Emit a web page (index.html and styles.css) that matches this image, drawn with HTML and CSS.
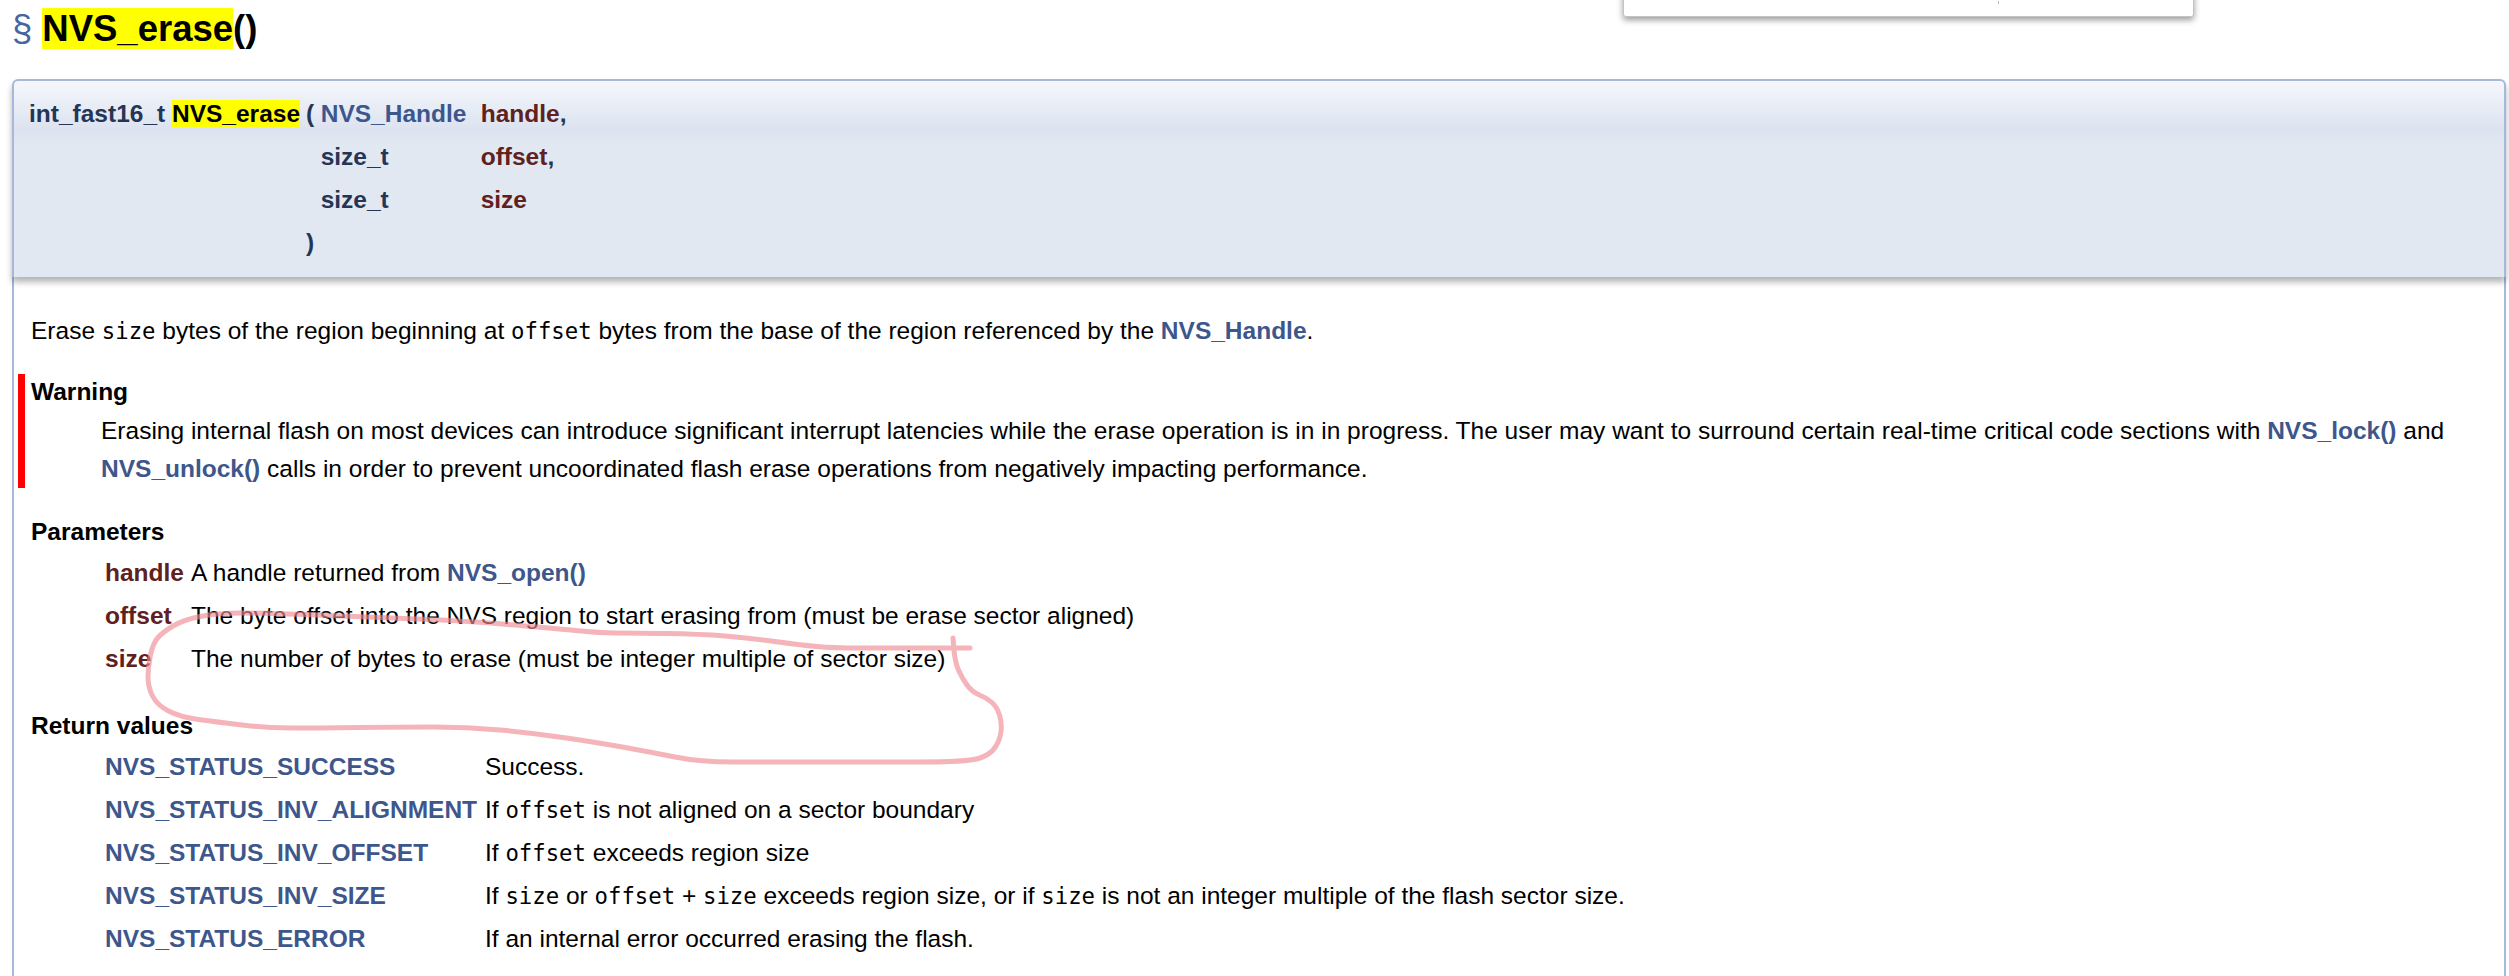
FILE: index.html
```html
<!DOCTYPE html>
<html lang="en">
<head>
<meta charset="utf-8">
<title>NVS_erase()</title>
<link rel="stylesheet" href="styles.css">
</head>
<body>
<div class="popup"><span class="popup-tick"></span></div>
<h2 class="memtitle"><span class="permalink">§</span><mark>NVS_erase</mark>()</h2>
<div class="memitem">
  <div class="memproto">
    <table class="memname">
      <tr><td class="fn">int_fast16_t <mark>NVS_erase</mark></td><td class="paren">(</td><td class="ptype"><a>NVS_Handle</a></td><td class="pname">handle<span class="comma">,</span></td></tr>
      <tr><td></td><td></td><td class="ptype">size_t</td><td class="pname">offset<span class="comma">,</span></td></tr>
      <tr><td></td><td></td><td class="ptype">size_t</td><td class="pname">size</td></tr>
      <tr><td></td><td class="paren">)</td><td></td><td></td></tr>
    </table>
  </div>
  <div class="memdoc">
    <p class="intro">Erase <code>size</code> bytes of the region beginning at <code>offset</code> bytes from the base of the region referenced by the <a>NVS_Handle</a>.</p>
    <dl class="warning">
      <dt>Warning</dt>
      <dd>Erasing internal flash on most devices can introduce significant interrupt latencies while the erase operation is in in progress. The user may want to surround certain real-time critical code sections with <a>NVS_lock()</a> and <a>NVS_unlock()</a> calls in order to prevent uncoordinated flash erase operations from negatively impacting performance.</dd>
    </dl>
    <div class="section-title">Parameters</div>
    <table class="params">
      <tr><td class="pn">handle</td><td>A handle returned from <a>NVS_open()</a></td></tr>
      <tr><td class="pn">offset</td><td>The byte offset into the NVS region to start erasing from (must be erase sector aligned)</td></tr>
      <tr><td class="pn">size</td><td>The number of bytes to erase (must be integer multiple of sector size)</td></tr>
    </table>
    <div class="section-title returns">Return values</div>
    <table class="retvals">
      <tr><td class="rv"><a>NVS_STATUS_SUCCESS</a></td><td>Success.</td></tr>
      <tr><td class="rv"><a>NVS_STATUS_INV_ALIGNMENT</a></td><td>If <code>offset</code> is not aligned on a sector boundary</td></tr>
      <tr><td class="rv"><a>NVS_STATUS_INV_OFFSET</a></td><td>If <code>offset</code> exceeds region size</td></tr>
      <tr><td class="rv"><a>NVS_STATUS_INV_SIZE</a></td><td>If <code>size</code> or <code>offset</code> + <code>size</code> exceeds region size, or if <code>size</code> is not an integer multiple of the flash sector size.</td></tr>
      <tr><td class="rv"><a>NVS_STATUS_ERROR</a></td><td>If an internal error occurred erasing the flash.</td></tr>
    </table>
  </div>
</div>
<svg class="annotation" viewBox="0 0 2509 976" width="2509" height="976" aria-hidden="true">
  <path d="M970 648 L861 648 Q833 648 816.5 646.5 Q800 645 775 641.5 Q750 638 725 636 Q700 634 666 633.5 Q633 633 616 633 Q600 633 575 630.5 Q550 628 508 624.5 Q467 621 417 619 Q367 617 317 615 Q267 613 242 613 Q217 613 200 616.5 Q183 620 173 626 Q163 632 158 637.5 Q153 643 150.5 655 Q148 667 148 677 Q148 687 152.5 696 Q157 705 168.5 711 Q180 717 198.5 719.5 Q217 722 242 725 Q267 728 292 728 Q317 728 358.5 727.5 Q400 727 433.5 727 Q467 727 500 730 Q533 733 566.5 738 Q600 743 625 747.5 Q650 752 675 757 Q700 762 733.5 762 L917 762 Q967 762 978.5 758.5 Q990 755 995 747.5 Q1000 740 1001 731.5 Q1002 723 999.5 715 Q997 707 992 702.5 Q987 698 979.5 695 Q972 692 967 685 Q962 678 958.5 670 Q955 662 954 650 L953 638"/>
</svg>
</body>
</html>
```
FILE: styles.css
```css
html, body { margin: 0; padding: 0; }
body {
  position: relative;
  height: 976px;
  overflow: hidden;
  background: #fff;
  color: #000;
  font: 24.5px/38px "Liberation Sans", Arial, sans-serif;
}
mark { background: #ff0; color: #000; }
a { color: #3d578c; font-weight: bold; }
code { font-family: "DejaVu Sans Mono", monospace; font-size: 22.3px; }
table { border-collapse: collapse; border-spacing: 0; }
td { padding: 0; }

.popup {
  position: absolute;
  left: 1623px;
  top: -10px;
  width: 569px;
  height: 25px;
  background: #fff;
  border: 1px solid #c4c4c4;
  border-radius: 3px;
  box-shadow: 0 3px 6px rgba(0, 0, 0, .4);
}
.popup-tick {
  position: absolute;
  left: 374px;
  top: 10px;
  width: 1px;
  height: 3px;
  background: #bbb;
}

.memtitle {
  margin: 0;
  padding: 8px 0 0 12px;
  height: 79px;
  box-sizing: border-box;
  font-size: 36.5px;
  line-height: 41px;
  font-weight: bold;
}
.memtitle mark { display: inline-block; }
.permalink {
  color: #4665a2;
  font-weight: normal;
  margin-right: 10px;
}

.memitem { margin: 0 3px 0 12px; }
.memproto {
  position: relative;
  z-index: 1;
  box-sizing: border-box;
  height: 198px;
  padding: 11.5px 0 0 15px;
  border: 2px solid #a8b8d9;
  border-width: 2px 2px 0 2px;
  border-radius: 6px 6px 0 0;
  background: linear-gradient(#f5f7fb 0, #dce3f0 48px, #e2e8f2 64px);
  box-shadow: 0 5px 6px rgba(0, 0, 0, .3);
  color: #253555;
  font-weight: bold;
}
.memname tr { height: 43px; }
.memname td { line-height: 28px; vertical-align: middle; }
.fn { padding-right: 6px; }
.paren { padding-right: 6.5px; }
.ptype { width: 160px; }
.pname { color: #602020; }
.comma { color: #253555; }

.memdoc {
  box-sizing: border-box;
  height: 720px;
  padding: 35px 0 0 17px;
  border: solid #a8b8d9;
  border-width: 0 2px 0 2px;
}
.intro { margin: 0 0 24px; }
.warning {
  margin: 0 0 25px -13px;
  padding-left: 6px;
  border-left: 7px solid #f00;
}
.warning dt { font-weight: bold; line-height: 36px; margin-bottom: 2px; }
.warning dd { margin: 0 0 0 70px; }
.section-title { font-weight: bold; }
.returns { margin-top: 27px; }

.params, .retvals { margin-left: 74px; }
.params tr, .retvals tr { height: 43px; }
.params td, .retvals td { line-height: 28px; vertical-align: middle; }
.pn { color: #602020; font-weight: bold; width: 86px; }
.rv { width: 380px; }

.annotation {
  position: absolute;
  left: 0;
  top: 0;
  z-index: 2;
  pointer-events: none;
}
.annotation path {
  fill: none;
  stroke: #ef8a92;
  stroke-opacity: .64;
  stroke-width: 5;
  stroke-linecap: round;
  stroke-linejoin: round;
  filter: blur(.7px);
}
```
